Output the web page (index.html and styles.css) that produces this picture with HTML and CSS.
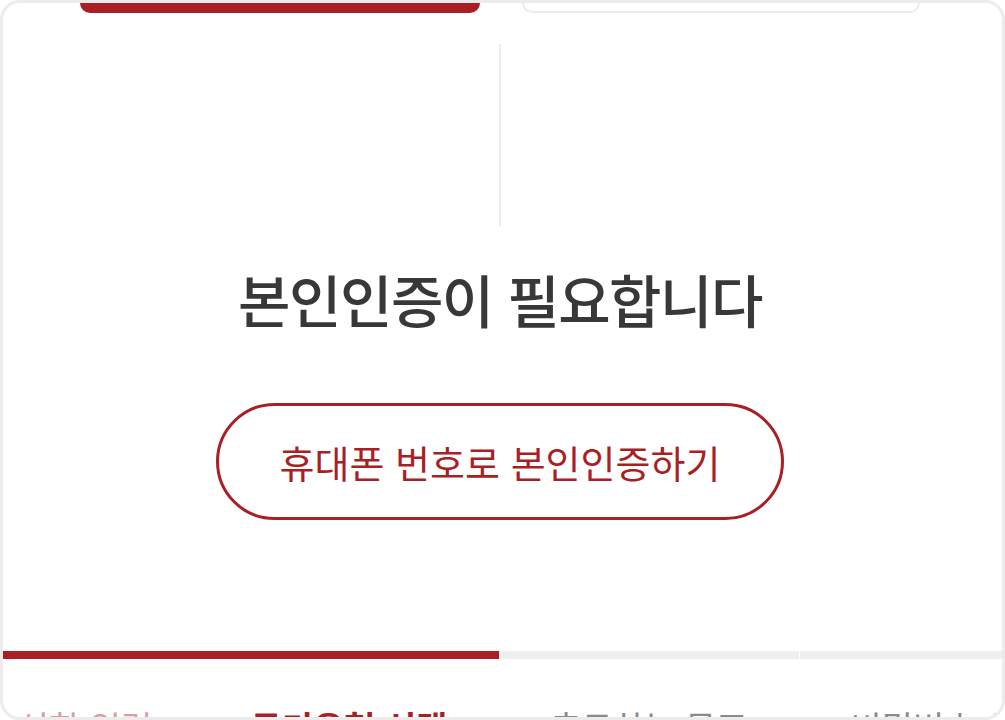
FILE: index.html
```html
<!DOCTYPE html>
<html lang="ko">
<head>
<meta charset="utf-8">
<title>본인인증</title>
<link rel="stylesheet" href="styles.css">
</head>
<body>
<div class="frame">
  <div class="main">
    <div class="tabs">
      <div class="tab tab-active"></div>
      <div class="tab tab-idle"></div>
    </div>
    <div class="divider"></div>
    <h1 class="title">본인인증이 필요합니다</h1>
    <button class="auth-btn" type="button">휴대폰 번호로 본인인증하기</button>
  </div>
  <div class="steps">
    <div class="step done"><div class="bar"></div><div class="label">본인 성향 입력</div></div>
    <div class="step current"><div class="bar"></div><div class="label">동기유형 선택</div></div>
    <div class="step todo"><div class="bar"></div><div class="label">추구하는 목표</div></div>
    <div class="step todo"><div class="bar"></div><div class="label">비밀번호 설정</div></div>
  </div>
</div>
</body>
</html>
```
FILE: styles.css
```css
* { box-sizing: border-box; }
html, body { margin: 0; padding: 0; background: #fff; }
body {
  font-family: "Noto Sans CJK KR", "Noto Sans", sans-serif;
  width: 1005px;
  height: 720px;
  overflow: hidden;
}
.frame {
  width: 1005px;
  height: 720px;
  border: 3px solid #ececec;
  border-radius: 20px;
  overflow: hidden;
  background: #fff;
  display: flex;
  flex-direction: column;
}
.main {
  height: 648px;
  flex: none;
  display: flex;
  flex-direction: column;
  align-items: center;
  padding-right: 5px;
}
.tabs {
  display: flex;
  gap: 42px;
  align-self: flex-start;
  margin-left: 77px;
}
.tab {
  height: 10px;
  border-radius: 0 0 13px 13px;
}
.tab-active {
  width: 400px;
  background: #aa1f25;
}
.tab-idle {
  width: 398px;
  border: 2px solid #ececec;
  border-top: none;
  background: #fff;
}
.divider {
  width: 2px;
  height: 182px;
  margin-top: 31px;
  background: #ededed;
}
.title {
  margin: 35px 0 0;
  font-size: 57px;
  line-height: 1.3;
  font-weight: 500;
  color: #383838;
  letter-spacing: -1.5px;
}
.auth-btn {
  margin-top: 68px;
  width: 568px;
  height: 117px;
  border: 3px solid #aa1f25;
  border-radius: 60px;
  background: #fff;
  color: #aa1f25;
  font-family: inherit;
  font-size: 38px;
  font-weight: 400;
  padding: 0;
  cursor: pointer;
}
.steps {
  display: flex;
  margin-left: -104px;
}
.step {
  flex: none;
  width: 300px;
  display: flex;
  flex-direction: column;
  align-items: center;
}
.bar {
  width: 100%;
  height: 8px;
  background: #eeeeee;
}
.todo + .todo .bar { border-left: 1px solid #fff; }
.step.done .bar, .step.current .bar { background: #aa1f25; }
.label {
  margin-top: 46px;
  font-size: 34px;
  line-height: 1.3;
  color: #8a8a8a;
  white-space: nowrap;
}
.step.done .label { color: #dc9da0; }
.step.current .label { color: #aa1f25; font-weight: 700; }
```
